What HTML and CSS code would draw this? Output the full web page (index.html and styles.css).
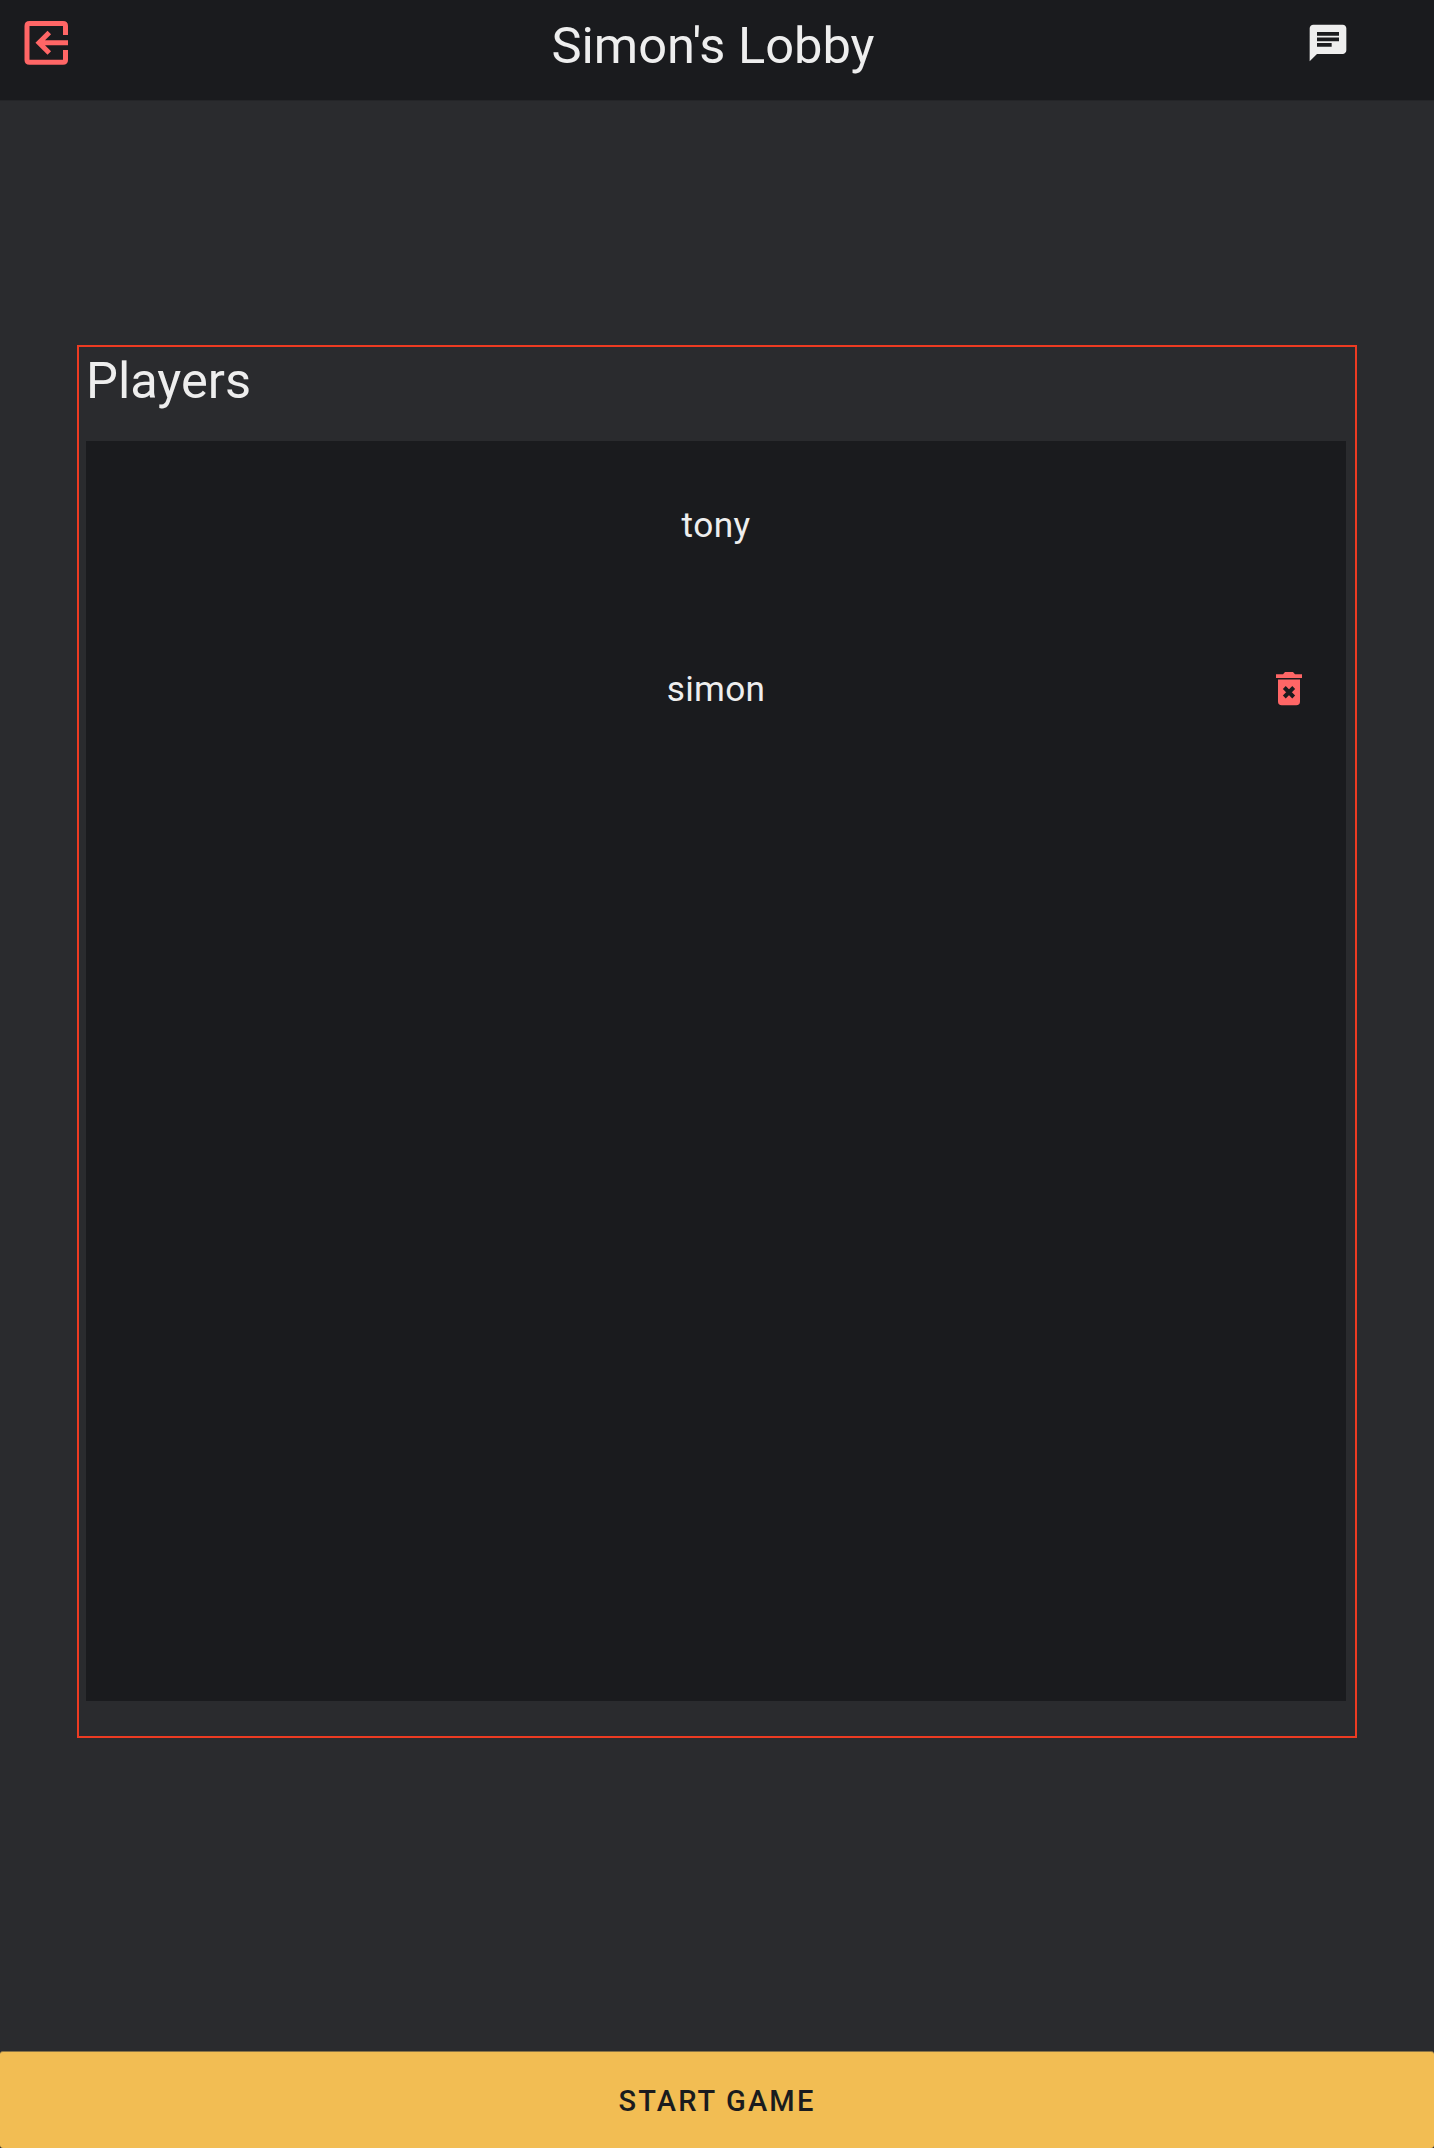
FILE: index.html
```html
<!DOCTYPE html>
<html lang="en">
<head>
<meta charset="utf-8">
<title>Simon's Lobby</title>
<link rel="stylesheet" href="styles.css">
</head>
<body>
<div class="lobby">
  <header class="topbar">
    <button class="icon-button leave" aria-label="Leave lobby">
      <svg width="44" height="44" viewBox="0 0 44 44" fill="none" stroke="currentColor" stroke-width="5">
        <path d="M41.500 14V5Q41.500 2.500 39 2.500H5.500Q3 2.500 3 5V39Q3 41.200 5.500 41.200H39Q41.500 41.200 41.500 39V29"/>
        <path d="M44 21.700H16M25.300 11.500L15 21.700L25.300 32"/>
      </svg>
    </button>
    <h1 class="title">Simon's Lobby</h1>
    <button class="icon-button chat" aria-label="Chat">
      <svg width="44" height="44" viewBox="0 0 24 24" fill="currentColor">
        <path d="M20 2H4c-1.100 0-1.990.9-1.990 2L2 22l4-4h14c1.100 0 2-.9 2-2V4c0-1.100-.9-2-2-2zM6 9h12v2H6V9zm8 5H6v-2h8v2zm4-6H6V6h12v2z"/>
      </svg>
    </button>
  </header>
  <main class="content">
    <section class="players">
      <h2 class="players-title">Players</h2>
      <ul class="player-list">
        <li class="player"><span class="name">tony</span></li>
        <li class="player">
          <span class="name">simon</span>
          <button class="icon-button kick" aria-label="Remove simon">
            <svg width="26" height="34" viewBox="0 0 26 34" fill="currentColor">
              <path d="M0 2.300H7L9 0H17L19 2.300H26V6H0ZM2 7.500H24V29.500Q24 33.300 20.200 33.300H5.800Q2 33.300 2 29.500Z"/>
              <path class="cross" d="M8.300 15.500L17.700 25M17.700 15.500L8.300 25"/>
            </svg>
          </button>
        </li>
      </ul>
    </section>
  </main>
  <button class="start">START GAME</button>
</div>
</body>
</html>
```
FILE: styles.css
```css
* { box-sizing: border-box; }
body {
  margin: 0;
  background: #2a2b2e;
  color: #eee;
  font-family: Roboto, sans-serif;
}
button { margin: 0; border: 0; padding: 0; font-family: inherit; cursor: pointer; }
.lobby { display: flex; flex-direction: column; height: 2148px; }
.topbar {
  display: grid;
  grid-template-columns: 128px 1fr 128px;
  height: 101px;
  background: #1a1b1e;
  border-bottom: 1px solid #242528;
}
.icon-button { background: none; display: block; }
.icon-button svg { display: block; }
.leave { color: #ff6666; padding: 21px 0 0 24px; justify-self: start; align-self: start; }
.chat { color: #eee; padding-top: 21px; justify-self: start; align-self: start; }
.title, .players-title { margin: 0; font-weight: 400; font-size: 50.6px; line-height: 60px; }
.title { text-align: center; padding: 16px 8px 0 0; }
.content { flex: 1; padding: 244px 77px 0; }
.players { height: 1393px; border: 2px solid #ed3b22; padding: 0 9px 0 7px; }
.players-title { height: 94px; padding-top: 4px; }
.player-list { list-style: none; margin: 0; padding: 0; height: 1260px; background: #1a1b1e; }
.player {
  display: grid;
  grid-template-columns: 112px 1fr 112px;
  align-items: center;
  height: 164px;
}
.player .name {
  grid-column: 2;
  padding-top: 4px;
  font-size: 35.2px;
  line-height: 48px;
  text-align: center;
  font-kerning: none;
  letter-spacing: 0.3px;
}
.kick { color: #ff6666; padding: 3px 0 0 41.5px; }
.cross { fill: none; stroke: #1a1b1e; stroke-width: 4; }
.start {
  height: 97px;
  border-top: 1px solid #8a7346;
  border-radius: 3px;
  padding-top: 1px;
  background: #f2bd53;
  color: #1a1b1e;
  font-size: 29px;
  font-weight: 500;
  letter-spacing: 2.15px;
}
```
